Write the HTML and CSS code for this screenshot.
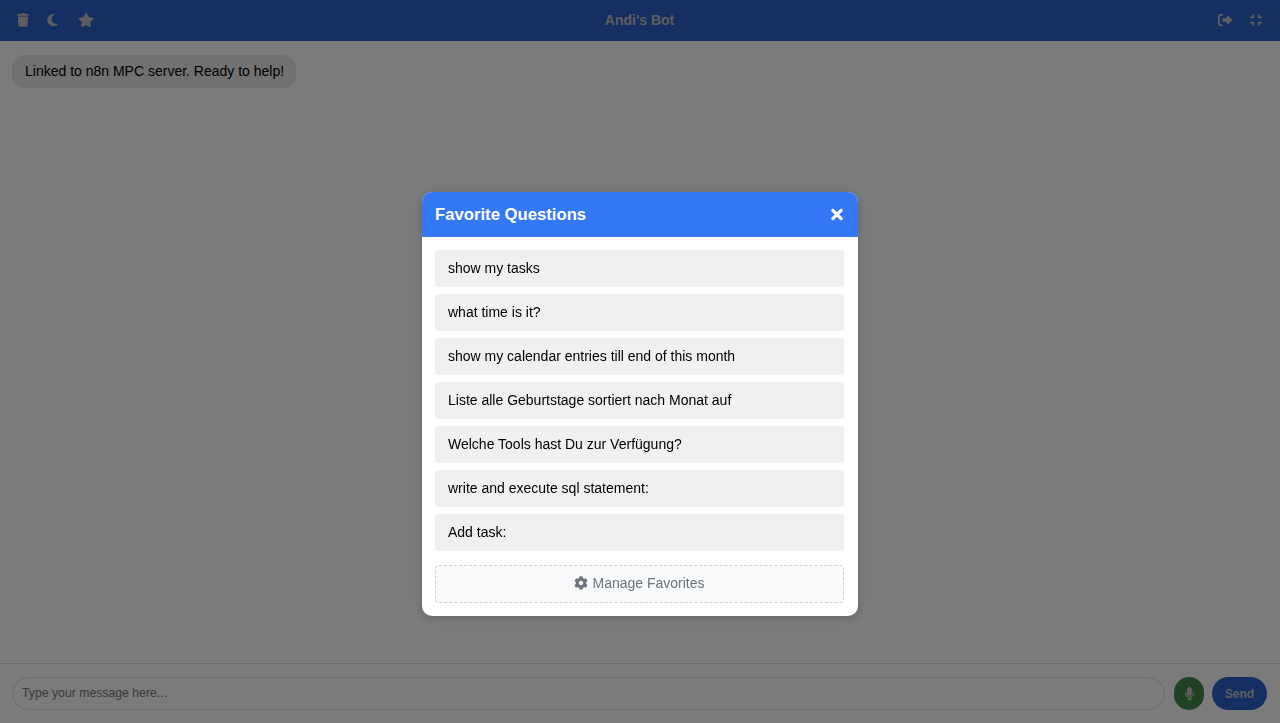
FILE: index.html
```html
<!DOCTYPE html>
<html lang="en">
<head>
<meta charset="utf-8">
<title>Andi's Bot</title>
<link rel="stylesheet" href="styles.css">
</head>
<body>
<div class="app">
  <header class="topbar">
    <div class="tools">
      <svg class="ic ic-trash" viewBox="0 0 448 512"><path d="M135.2 17.7L128 32H32C14.3 32 0 46.3 0 64S14.3 96 32 96H416c17.7 0 32-14.3 32-32s-14.3-32-32-32H320l-7.2-14.3C307.4 6.8 296.3 0 284.2 0H163.8c-12.1 0-23.2 6.8-28.6 17.7zM416 128H32L53.2 467c1.6 25.3 22.6 45 47.9 45H346.9c25.3 0 46.3-19.7 47.9-45L416 128z"/></svg>
      <svg class="ic ic-moon" viewBox="0 0 384 512"><path d="M223.5 32C100 32 0 132.3 0 256S100 480 223.5 480c60.6 0 115.5-24.2 155.8-63.4c5-4.9 6.3-12.5 3.1-18.7s-10.1-9.7-17-8.5c-9.8 1.7-19.8 2.6-30.1 2.6c-96.9 0-175.5-78.8-175.5-176c0-65.8 36-123.1 89.3-153.3c6.1-3.5 9.2-10.5 7.7-17.3s-7.3-11.9-14.3-12.5c-6.3-.5-12.6-.8-19-.8z"/></svg>
      <svg class="ic ic-star" viewBox="0 0 576 512"><path d="M316.9 18C311.6 7 300.4 0 288.1 0s-23.4 7-28.8 18L195 150.3 51.4 171.5c-12 1.8-22 10.2-25.7 21.7s-.7 24.2 7.9 32.7L137.8 329 113.2 474.7c-2 12 3 24.2 12.9 31.3s23 8 33.8 2.3l128.3-68.5 128.3 68.5c10.8 5.7 23.9 4.9 33.8-2.3s14.9-19.3 12.9-31.3L438.5 329 542.7 225.9c8.6-8.5 11.7-21.2 7.9-32.7s-13.7-19.9-25.7-21.7L381.2 150.3 316.9 18z"/></svg>
    </div>
    <h1 class="title">Andi's Bot</h1>
    <div class="tools tools-right">
      <svg class="ic ic-out" viewBox="0 0 512 512"><path d="M377.9 105.9L500.7 228.7c7.2 7.2 11.3 17.1 11.3 27.3s-4.1 20.1-11.3 27.3L377.9 406.1c-6.4 6.4-15 9.9-24 9.9c-18.7 0-33.9-15.2-33.9-33.9l0-62.1-128 0c-17.7 0-32-14.3-32-32l0-64c0-17.7 14.3-32 32-32l128 0 0-62.1c0-18.7 15.2-33.9 33.9-33.9c9 0 17.6 3.6 24 9.9zM160 96L96 96c-17.7 0-32 14.3-32 32l0 256c0 17.7 14.3 32 32 32l64 0c17.7 0 32 14.3 32 32s-14.3 32-32 32l-64 0c-53 0-96-43-96-96L0 128C0 75 43 32 96 32l64 0c17.7 0 32 14.3 32 32s-14.3 32-32 32z"/></svg>
      <svg class="ic ic-compress" viewBox="0 0 448 512"><path d="M160 64c0-17.7-14.3-32-32-32s-32 14.3-32 32v64H32c-17.7 0-32 14.3-32 32s14.3 32 32 32h96c17.7 0 32-14.3 32-32V64zM32 320c-17.7 0-32 14.3-32 32s14.3 32 32 32H96v64c0 17.7 14.3 32 32 32s32-14.3 32-32V352c0-17.7-14.3-32-32-32H32zM352 64c0-17.7-14.3-32-32-32s-32 14.3-32 32v96c0 17.7 14.3 32 32 32h96c17.7 0 32-14.3 32-32s-14.3-32-32-32H352V64zM320 320c-17.7 0-32 14.3-32 32v96c0 17.7 14.3 32 32 32s32-14.3 32-32V384h64c17.7 0 32-14.3 32-32s-14.3-32-32-32H320z"/></svg>
    </div>
  </header>
  <main class="chat">
    <div class="bubble">Linked to n8n MPC server. Ready to help!</div>
  </main>
  <footer class="composer">
    <input class="field" type="text" placeholder="Type your message here...">
    <button class="mic" type="button">
      <svg class="ic-mic" viewBox="0 0 352 512"><path d="M176 352c53.02 0 96-42.98 96-96V96c0-53.02-42.98-96-96-96S80 42.98 80 96v160c0 53.02 42.98 96 96 96zm160-160h-16c-8.84 0-16 7.16-16 16v48c0 74.8-64.49 134.82-140.79 127.38C96.71 376.89 48 317.11 48 250.3V208c0-8.84-7.16-16-16-16H16c-8.84 0-16 7.16-16 16v40.16c0 89.64 63.97 169.55 152 181.69V464H96c-8.84 0-16 7.16-16 16v16c0 8.84 7.16 16 16 16h160c8.84 0 16-7.16 16-16v-16c0-8.84-7.16-16-16-16h-56v-33.77C285.71 418.47 352 344.9 352 256v-48c0-8.84-7.16-16-16-16z"/></svg>
    </button>
    <button class="send" type="button">Send</button>
  </footer>
</div>
<div class="overlay">
  <section class="modal">
    <div class="modal-head">
      <h2 class="modal-title">Favorite Questions</h2>
      <svg class="ic-close" viewBox="0 0 352 512"><path d="M242.72 256l100.07-100.07c12.28-12.28 12.28-32.19 0-44.48l-22.24-22.24c-12.28-12.28-32.19-12.28-44.48 0L176 189.28 75.93 89.21c-12.28-12.28-32.19-12.28-44.48 0L9.21 111.45c-12.28 12.28-12.28 32.19 0 44.48L109.28 256 9.21 356.07c-12.28 12.28-12.28 32.19 0 44.48l22.24 22.24c12.28 12.28 32.2 12.28 44.48 0L176 322.72l100.07 100.07c12.28 12.28 32.2 12.28 44.48 0l22.24-22.24c12.28-12.28 12.28-32.19 0-44.48L242.72 256z"/></svg>
    </div>
    <div class="modal-body">
      <div class="fav">show my tasks</div>
      <div class="fav">what time is it?</div>
      <div class="fav">show my calendar entries till end of this month</div>
      <div class="fav">Liste alle Geburtstage sortiert nach Monat auf</div>
      <div class="fav">Welche Tools hast Du zur Verfügung?</div>
      <div class="fav">write and execute sql statement:</div>
      <div class="fav">Add task:</div>
      <div class="manage">
        <svg class="ic-cog" viewBox="0 0 512 512"><path d="M487.4 315.7l-42.6-24.6c4.3-23.2 4.3-47 0-70.2l42.6-24.6c4.9-2.8 7.1-8.6 5.5-14-11.1-35.6-30-67.8-54.7-94.6-3.8-4.1-10-5.1-14.8-2.3L380.8 110c-17.9-15.4-38.5-27.3-60.8-35.1V25.8c0-5.6-3.9-10.5-9.4-11.7-36.7-8.2-74.3-7.8-109.2 0-5.5 1.2-9.4 6.1-9.4 11.7V75c-22.2 7.9-42.8 19.8-60.8 35.1L88.7 85.5c-4.9-2.8-11-1.9-14.8 2.3-24.7 26.7-43.6 58.9-54.7 94.6-1.7 5.4.6 11.2 5.5 14L67.3 221c-4.3 23.2-4.3 47 0 70.2l-42.6 24.6c-4.9 2.8-7.1 8.6-5.5 14 11.1 35.6 30 67.8 54.7 94.6 3.8 4.1 10 5.1 14.8 2.3l42.6-24.6c17.9 15.4 38.5 27.3 60.8 35.1v49.2c0 5.6 3.9 10.5 9.4 11.7 36.7 8.2 74.3 7.8 109.2 0 5.5-1.2 9.4-6.1 9.4-11.7v-49.2c22.2-7.9 42.8-19.8 60.8-35.1l42.6 24.6c4.9 2.8 11 1.9 14.8-2.3 24.7-26.7 43.6-58.9 54.7-94.6 1.5-5.5-.7-11.3-5.6-14.1zM256 336c-44.1 0-80-35.9-80-80s35.9-80 80-80 80 35.9 80 80-35.9 80-80 80z"/></svg>
        <span>Manage Favorites</span>
      </div>
    </div>
  </section>
</div>
</body>
</html>
```
FILE: styles.css
```css
* { box-sizing: border-box; }
html, body { margin: 0; height: 100%; overflow: hidden; }
body { font-family: "Liberation Sans", Arial, sans-serif; font-size: 14px; color: #000; background: #f6f6f6; }

.app { height: 100vh; display: flex; flex-direction: column; }

.topbar {
  height: 41px;
  flex: none;
  display: grid;
  grid-template-columns: 1fr auto 1fr;
  align-items: center;
  padding: 0 18px 1px 17px;
  background: #2a5ec6;
  color: #bcbcbc;
}
.title { margin: 0; font-size: 14px; font-weight: 700; }
.tools { display: flex; align-items: center; gap: 18px; }
.tools-right { justify-content: flex-end; gap: 18px; }
.ic { height: 14px; fill: #bcbcbc; display: block; }
.ic-trash { width: 12px; }
.ic-moon { width: 11px; }
.ic-star { width: 16px; margin-left: 2px; }
.ic-out { width: 14px; }
.ic-compress { width: 12px; }

.chat { flex: 1; padding: 14px 12px; }
.bubble {
  display: inline-block;
  padding: 8px 12px 8px 13px;
  background: #e2e2e2;
  border-radius: 13px;
  line-height: 17px;
}

.composer {
  height: 60px;
  flex: none;
  display: flex;
  align-items: center;
  gap: 8px;
  padding: 0 13px 0 12px;
  border-top: 1px solid #d6d6d6;
  background: #f6f6f6;
}
.field {
  flex: 1;
  height: 33px;
  padding: 0 9px 1px;
  border: 1px solid #d6d6d6;
  border-radius: 17px;
  background: #f6f6f6;
  font: 12.25px "Liberation Sans", Arial, sans-serif;
  margin-right: 1px;
}
.mic, .send { border: 0; height: 33px; border-radius: 17px; color: #bcbcbc; padding: 0; display: flex; align-items: center; justify-content: center; }
.mic { width: 30px; background: #418548; }
.ic-mic { width: 9px; height: 13px; fill: #bcbcbc; }
.send { width: 55px; background: #2a5ec6; font: 700 12px "Liberation Sans", Arial, sans-serif; }

.overlay {
  position: fixed;
  inset: 0;
  display: flex;
  align-items: flex-start;
  justify-content: center;
  padding-top: 192px;
  background: rgba(0, 0, 0, .5);
}
.modal {
  width: 436px;
  background: #fff;
  border-radius: 10px;
  overflow: hidden;
  box-shadow: 0 2px 10px rgba(0, 0, 0, .2);
}
.modal-head {
  height: 45px;
  display: flex;
  align-items: center;
  justify-content: space-between;
  padding: 0 15px 0 13px;
  background: #3478f6;
  color: #fff;
}
.modal-title { margin: 0; font-size: 16.7px; font-weight: 700; }
.ic-close { width: 12px; height: 17px; fill: #fff; }
.modal-body { padding: 13px 14px 13px 13px; display: flex; flex-direction: column; gap: 7px; }
.fav {
  height: 37px;
  padding: 0 13px 1px;
  display: flex;
  align-items: center;
  background: #f0f0f0;
  border-radius: 4px;
}
.manage {
  height: 38px;
  margin-top: 7px;
  padding-bottom: 2px;
  display: flex;
  align-items: center;
  justify-content: center;
  gap: 4px;
  border: 1px dashed #ced4da;
  border-radius: 4px;
  background: #f8f9fa;
  color: #6c757d;
}
.ic-cog { width: 14px; height: 14px; fill: #6c757d; }
```
